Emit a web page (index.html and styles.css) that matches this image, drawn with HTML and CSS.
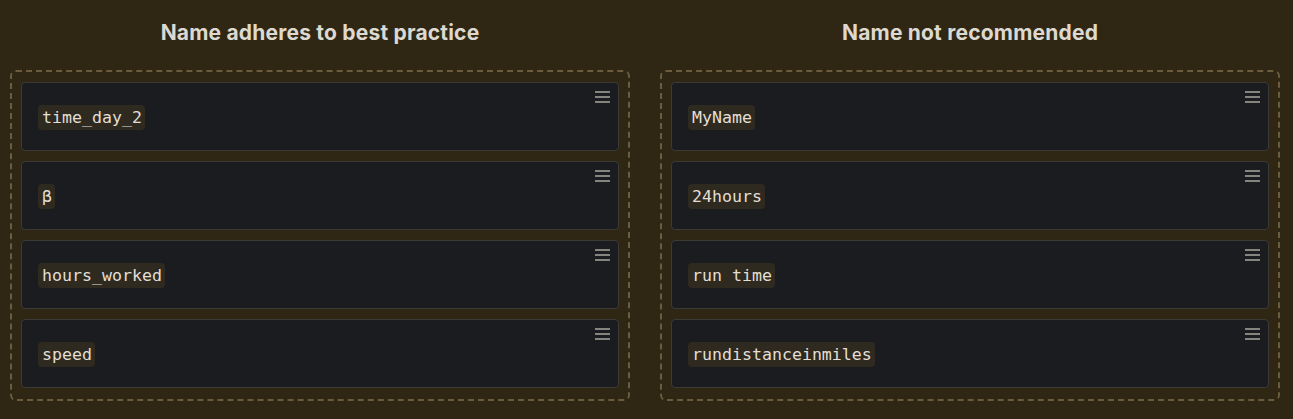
FILE: index.html
```html
<!DOCTYPE html>
<html>
<head>
<meta charset="utf-8">
<link rel="stylesheet" href="styles.css">
</head>
<body>
<div class="board">
  <section class="col">
    <h2 class="title">Name adheres to best practice</h2>
    <div class="zone">
      <div class="card"><code class="pill">time_day_2</code><span class="grip"><i></i><i></i><i></i></span></div>
      <div class="card"><code class="pill">β</code><span class="grip"><i></i><i></i><i></i></span></div>
      <div class="card"><code class="pill">hours_worked</code><span class="grip"><i></i><i></i><i></i></span></div>
      <div class="card"><code class="pill">speed</code><span class="grip"><i></i><i></i><i></i></span></div>
    </div>
  </section>
  <section class="col">
    <h2 class="title">Name not recommended</h2>
    <div class="zone">
      <div class="card"><code class="pill">MyName</code><span class="grip"><i></i><i></i><i></i></span></div>
      <div class="card"><code class="pill">24hours</code><span class="grip"><i></i><i></i><i></i></span></div>
      <div class="card"><code class="pill">run time</code><span class="grip"><i></i><i></i><i></i></span></div>
      <div class="card"><code class="pill">rundistanceinmiles</code><span class="grip"><i></i><i></i><i></i></span></div>
    </div>
  </section>
</div>
</body>
</html>
```

FILE: styles.css
```css
html, body {
  margin: 0;
  padding: 0;
  background: #2f2713;
  height: 100%;
}
.board {
  display: grid;
  grid-template-columns: 1fr 1fr;
  column-gap: 30px;
  padding: 0 13px 0 10px;
}
.col {
  display: flex;
  flex-direction: column;
}
.title {
  margin: 0;
  height: 70px;
  display: flex;
  align-items: center;
  justify-content: center;
  padding-bottom: 6px;
  box-sizing: border-box;
  font-family: "Inter", "Lato", sans-serif;
  font-weight: 700;
  font-size: 21px;
  letter-spacing: 0.2px;
  color: #ddd9d0;
}
.zone {
  border: 2px dashed #6a5c3c;
  border-radius: 6px;
  padding: 10px 9px 11px 9px;
  display: flex;
  flex-direction: column;
  gap: 10px;
}
.card {
  position: relative;
  height: 69px;
  box-sizing: border-box;
  background: #1b1c1f;
  border: 1px solid #3b3a36;
  border-radius: 4px;
  display: flex;
  align-items: center;
  padding-left: 16px;
  padding-top: 2px;
}
.pill {
  font-family: "DejaVu Sans Mono", monospace;
  font-size: 16.6px;
  line-height: 25px;
  color: #e3dfd6;
  background: #2f2a20;
  border-radius: 4px;
  padding: 0 3px 0 4px;
}
.grip {
  position: absolute;
  top: 8px;
  right: 8px;
  width: 15px;
  display: flex;
  flex-direction: column;
  gap: 3px;
}
.grip i {
  display: block;
  height: 2px;
  background: #85847f;
}
```
